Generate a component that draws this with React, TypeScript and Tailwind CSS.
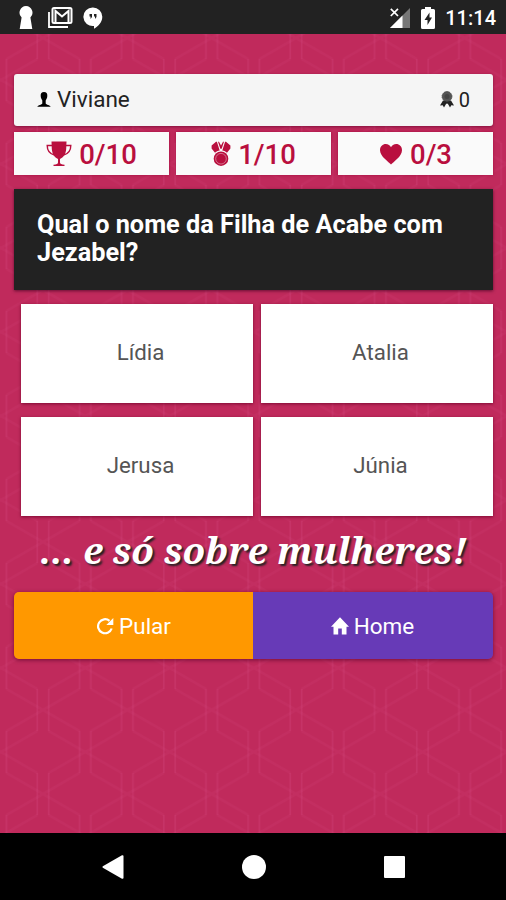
import type { ReactNode } from "react";

type IconProps = { className?: string };

const PersonIcon = ({ className }: IconProps) => (
  <svg viewBox="0 0 14 15" className={className} fill="currentColor">
    <path d="M7 0C4.600 0 3.500 1.600 3.700 3.900 3.800 6 4.600 7 5.300 8.600V11.500C4.800 13 1 12.800 .3 14.800H13.700C13 12.800 9.200 13 8.700 11.500V8.600C9.400 7 10.200 6 10.300 3.900 10.500 1.600 9.400 0 7 0Z" />
  </svg>
);

const RosetteIcon = ({ className }: IconProps) => (
  <svg viewBox="0 0 14 17" className={className}>
    <path d="M3 9.500 0 14.500l2.700-.3L4 16.500l2.300-4L7 13l.7-.5L10 16.500l1.300-2.300 2.700.3-3-5Z" fill="#222" />
    <circle cx="7" cy="5.500" r="4.900" fill="#555" stroke="#444" strokeWidth="1" strokeDasharray="1.300 .6" />
    <circle cx="7" cy="5.500" r="2.500" fill="#444" />
  </svg>
);

const TrophyIcon = ({ className }: IconProps) => (
  <svg viewBox="0 0 26 26" className={className} fill="currentColor">
    <path d="M5.500 .5H20.500L20.200 8C19.800 13 17.500 16.500 14 18V21.500C14 22.800 15.500 23.600 18.500 23.800V25H7.500V23.800C10.500 23.600 12 22.800 12 21.500V18C8.500 16.500 6.200 13 5.800 8Z" />
    <path d="M6 4.500H1.200C1.200 9.500 3.500 12.800 8.500 14M20 4.500H24.800C24.800 9.500 22.500 12.800 17.500 14" fill="none" stroke="currentColor" strokeWidth="1.400" />
  </svg>
);

const MedalIcon = ({ className }: IconProps) => (
  <svg viewBox="0 0 20 26" className={className} fill="currentColor">
    <path d="M5 .8 .6 4.500V7.500L4 11.800C5.200 10.600 6.800 9.800 8.700 9.500L5.900 .8ZM15 .8 19.400 4.500V7.500L16 11.800C14.800 10.600 13.200 9.800 11.300 9.500L14.100 .8ZM7 .8 9.300 7.800H10.700L13 .8H12L10 4.500 8 .8Z" />
    <circle cx="10" cy="17.700" r="7.300" />
    <circle cx="10" cy="17.700" r="5.300" fill="none" stroke="#f9f9f9" strokeOpacity=".5" strokeWidth=".8" />
  </svg>
);

const HeartIcon = ({ className }: IconProps) => (
  <svg viewBox="0 0 24 22" className={className} fill="currentColor">
    <path d="M12 21.500C10 19 1 13.500 1 7.200 1 3.300 3.800 1 6.700 1 9.200 1 11.200 2.500 12 4.300 12.800 2.500 14.800 1 17.300 1 20.200 1 23 3.300 23 7.200 23 13.500 14 19 12 21.500Z" />
  </svg>
);

const RefreshIcon = ({ className }: IconProps) => (
  <svg viewBox="0 0 18 18" className={className}>
    <path d="M15.700 11.500A7 7 0 1 1 13.500 3.800" fill="none" stroke="currentColor" strokeWidth="2.200" />
    <path d="M17.300 1V8H10.300Z" fill="currentColor" />
  </svg>
);

const HomeIcon = ({ className }: IconProps) => (
  <svg viewBox="0 0 18 18" className={className} fill="currentColor">
    <path d="M9 .3 0 9.800H2.500V17.500H7.200V11.500H10.800V17.500H15.500V9.800H18Z" />
  </svg>
);

const stats: { value: string; icon: ReactNode }[] = [
  { value: "0/10", icon: <TrophyIcon className="h-[26px] w-[26px]" /> },
  { value: "1/10", icon: <MedalIcon className="h-[26px] w-5" /> },
  { value: "0/3", icon: <HeartIcon className="h-[22px] w-6" /> },
];

const answers = ["Lídia", "Atalia", "Jerusa", "Júnia"];

function StatusBar() {
  return (
    <header className="flex h-[34px] shrink-0 items-center bg-[#222] pl-[19px] pr-[10px] pt-px text-white">
      <svg viewBox="0 0 14 23" className="h-[23px] w-[14px]" fill="white">
        <path d="M7 0A6.700 6.700 0 0 0 2.600 11.500L.7 23H13.300L11.400 11.500A6.700 6.700 0 0 0 7 0Z" />
      </svg>
      <svg viewBox="0 0 26 22" className="ml-[14px] h-[22px] w-[26px]">
        <path d="M2 5V20H21" fill="none" stroke="white" strokeWidth="1.800" />
        <rect x="5.500" y="1" width="19" height="15" rx="1.500" fill="#222" stroke="white" strokeWidth="2" />
        <path d="M8.500 16V4L15 9.500 21.500 4V16" fill="none" stroke="white" strokeWidth="2" />
      </svg>
      <svg viewBox="0 0 20 22" className="ml-[10px] h-[22px] w-5">
        <path d="M10 .5A9.300 9.300 0 1 0 11 19V21.700C15.500 19.500 19.300 15 19.300 9.800A9.300 9.300 0 0 0 10 .5Z" fill="white" />
        <path d="M6.500 7H9V10L7.500 12V9.500H6.500ZM11 7H13.500V10L12 12V9.500H11Z" fill="#222" />
      </svg>
      <svg viewBox="0 0 20 20" className="ml-auto h-5 w-5">
        <path d="M20 0V20H0Z" fill="#777" />
        <path d="M12.500 7.500V20H0Z" fill="white" />
        <path d="M.8 .8 8 8M8 .8 .8 8" stroke="#222" strokeWidth="4" />
        <path d="M.8 .8 8 8M8 .8 .8 8" stroke="white" strokeWidth="1.700" />
      </svg>
      <svg viewBox="0 0 14 22" className="ml-[11px] h-[22px] w-[14px]">
        <path d="M4 0H10V2H12.500Q14 2 14 3.500V20.500Q14 22 12.500 22H1.500Q0 22 0 20.500V3.500Q0 2 1.500 2H4Z" fill="white" />
        <path d="M8.500 5.500 3.500 13H6.500V18L11 10.500H8.500Z" fill="#222" />
      </svg>
      <span className="ml-[10px] text-[20px] leading-none font-medium">11:14</span>
    </header>
  );
}

function HexPattern() {
  return (
    <svg className="absolute inset-0 h-full w-full" aria-hidden="true">
      <defs>
        <pattern id="hex" x="43" y="676" width="84.330" height="84" patternUnits="userSpaceOnUse">
          <g fill="none" stroke="#d8508a">
            <path
              d="M0 0 36.500 21M36.500 63 0 84M84.330 0 47.830 21M47.830 63 84.330 84M5.660 21 42.160 42 78.660 21M5.660 63 42.160 42 78.660 63"
              strokeOpacity=".11"
              strokeWidth="2.500"
            />
            <path
              d="M36.500 21V63M47.830 21V63M5.660 0V21M78.660 0V21M5.660 63V84M78.660 63V84"
              strokeOpacity=".24"
              strokeWidth="1.600"
            />
          </g>
        </pattern>
      </defs>
      <rect width="100%" height="100%" fill="url(#hex)" />
    </svg>
  );
}

function NavBar() {
  return (
    <footer className="flex h-[67px] shrink-0 items-center bg-black pl-[102px]">
      <svg viewBox="0 0 22 24" className="h-6 w-[22px]" fill="white">
        <path d="M.8 11.200 20 .3Q21.500 0 21.500 1V23Q21.500 24 20 23.700L.8 12.800Q0 12 .8 11.200Z" />
      </svg>
      <div className="ml-[118px] h-6 w-6 rounded-full bg-white" />
      <div className="ml-[118px] h-[22px] w-[21px] rounded-[1px] bg-white" />
    </footer>
  );
}

export default function App() {
  return (
    <div className="flex h-[900px] w-[506px] flex-col overflow-hidden bg-[#c02a5c] font-[Roboto,sans-serif]">
      <StatusBar />

      <main className="relative flex-1">
        <HexPattern />
        <div className="relative px-[14px] pt-10">
          <section className="flex h-[52px] w-[479px] items-center justify-between rounded-[3px] bg-[#f5f5f5] px-[23px] pb-px text-[#222] shadow-[0_1px_3px_rgba(90,0,40,0.6)]">
            <div className="flex items-center gap-[6px]">
              <PersonIcon className="h-[15px] w-[14px] text-black" />
              <span className="text-[22.500px] leading-none">Viviane</span>
            </div>
            <div className="flex items-center gap-[5px]">
              <RosetteIcon className="h-[17px] w-[14px]" />
              <span className="text-[20px] leading-none">0</span>
            </div>
          </section>

          <section className="mt-[6px] grid w-[479px] grid-cols-3 gap-[7px]">
            {stats.map((stat) => (
              <div
                key={stat.value}
                className="flex h-[43px] items-center justify-center gap-[7px] bg-[#fafafa] text-[#b90f3e] shadow-[0_0_3px_rgba(150,0,50,0.7)]"
              >
                {stat.icon}
                <span className="pt-[2px] text-[27.500px] leading-none font-medium">{stat.value}</span>
              </div>
            ))}
          </section>

          <section className="mt-[14px] h-[101px] w-[479px] bg-[#222] pl-[23px] pt-[22px] shadow-[0_1px_3px_rgba(60,0,30,0.7)]">
            <h1 className="text-[25.300px] leading-[28px] font-bold whitespace-nowrap text-white">
              Qual o nome da Filha de Acabe com
              <br />
              Jezabel?
            </h1>
          </section>

          <section className="mt-[14px] ml-[7px] grid w-[472px] grid-cols-2 gap-x-2 gap-y-[14px]">
            {answers.map((answer) => (
              <button
                key={answer}
                className="h-[99px] bg-white pb-[2px] pl-[7px] text-[22.300px] text-[#555] shadow-[0_1px_3px_rgba(110,0,40,0.8)]"
              >
                {answer}
              </button>
            ))}
          </section>

          <p className="mt-[9px] flex h-[50px] w-[479px] items-center justify-center font-['Noto_Serif','Droid_Serif','DejaVu_Serif',serif] text-[36.800px] leading-none font-bold whitespace-nowrap text-white italic [text-shadow:2px_2px_2px_#222]">
            ... e só sobre mulheres!
          </p>

          <section className="mt-[17px] flex h-[67px] w-[479px] overflow-hidden rounded-[5px] text-[22.500px] text-white shadow-[0_1px_4px_rgba(80,0,40,0.7)]">
            <button className="flex flex-1 items-center justify-center gap-[5px] bg-[#ff9800]">
              <RefreshIcon className="h-[18px] w-[18px]" />
              <span className="pt-[2px] leading-none">Pular</span>
            </button>
            <button className="flex flex-1 items-center justify-center gap-[5px] bg-[#673ab7] pr-px">
              <HomeIcon className="h-[18px] w-[18px]" />
              <span className="pt-[2px] leading-none">Home</span>
            </button>
          </section>
        </div>
      </main>

      <NavBar />
    </div>
  );
}
